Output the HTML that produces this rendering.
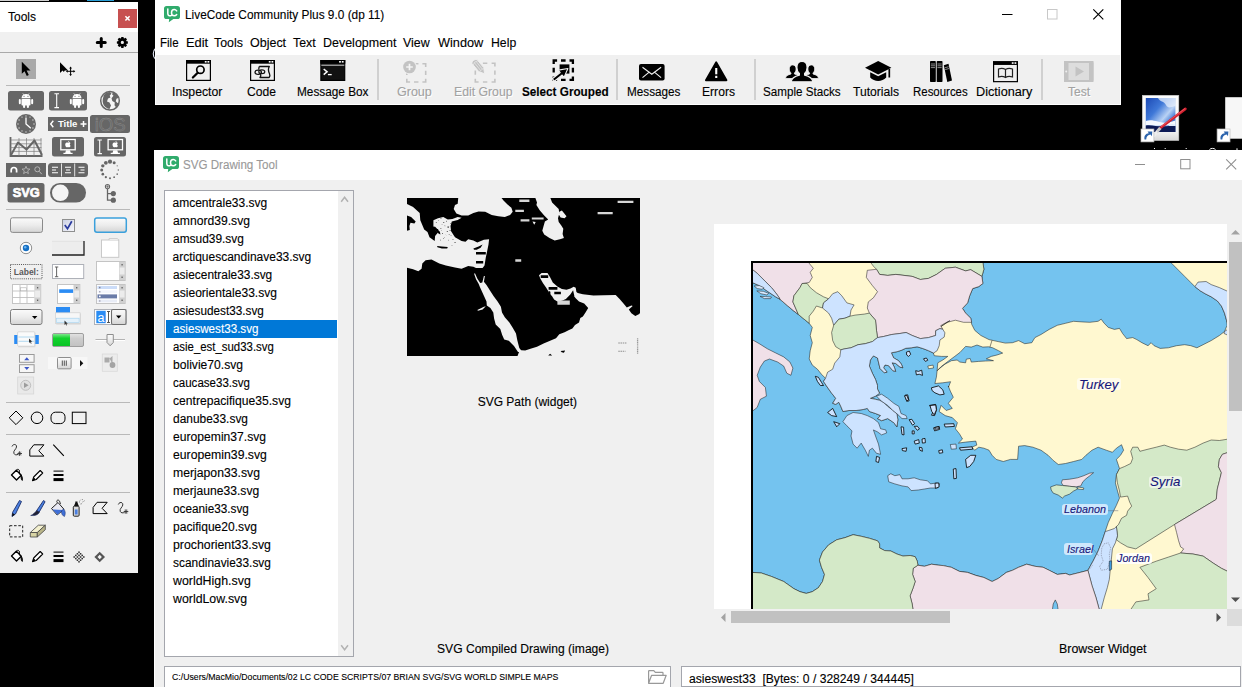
<!DOCTYPE html>
<html lang="en"><head><meta charset="utf-8"><title>LiveCode - SVG Drawing Tool</title>
<style>
html,body{margin:0;padding:0}
body{width:1242px;height:687px;background:#000;overflow:hidden;position:relative;font-family:"Liberation Sans",sans-serif;font-size:12px;color:#000}
.a{position:absolute}
.t{position:absolute;white-space:pre;line-height:1;transform-origin:0 50%;-webkit-text-stroke:.12px currentColor}
svg{position:absolute;overflow:visible}
.win{position:absolute;background:#f0f0f0}
.sep{position:absolute;left:6px;width:124px;height:1px;background:#b9b9b9}
.vsep{position:absolute;top:59px;width:2px;height:41px;background:#d0d0d0}
.li{position:absolute;left:1px;width:171px;height:18px}
.sel{background:#0078d7}
.field{position:absolute;background:#fff;border:1px solid #7a7a7a;box-sizing:border-box}
</style>
</head>
<body>
<div class="a" id="desktop" style="left:0;top:0;width:1242px;height:687px">
<div class="a" style="left:0;top:0;width:49px;height:1px;background:#cfcfcf"></div>
<div class="a" style="left:87px;top:0;width:27px;height:1px;background:#2a9fd6"></div>
<svg style="left:150px;top:48px" width="6" height="12" viewBox="0 0 6 12"><path d="M5.500 .5C2.500 3 2.500 8.500 5.500 11" fill="none" stroke="#e8eefc" stroke-width="1.100"/></svg>
<svg style="left:1140px;top:94px" width="50" height="56" viewBox="1140 94 50 56"><defs><linearGradient id="fr" x1="0" y1="0" x2="0" y2="1"><stop offset="0" stop-color="#fdfdfd"/><stop offset=".8" stop-color="#f2f2f2"/><stop offset="1" stop-color="#d8d8d8"/></linearGradient><linearGradient id="sky" x1="0" y1="0" x2="1" y2="1"><stop offset="0" stop-color="#1c49b4"/><stop offset=".35" stop-color="#3f78d8"/><stop offset=".6" stop-color="#b9d2f4"/><stop offset=".75" stop-color="#4a80d8"/><stop offset="1" stop-color="#2a58b8"/></linearGradient></defs><rect x="1142.300" y="95.300" width="36.500" height="45.200" fill="url(#fr)" stroke="#c9c9c9" stroke-width=".6"/><rect x="1145.800" y="98" width="29.600" height="34" fill="url(#sky)"/><path d="M1158 98c2 4 6 3 8 7s5 2 9.400 1V98z" fill="#e8f0fc" opacity=".75"/><path d="M1145.800 121c4-1.500 8-.5 12 .5s8 2.500 17.600-1v5h-29.600z" fill="#f4f8ff"/><path d="M1145.800 125.500c6-1 12 1.500 18 1s8-1 11.600-.5V132h-29.600z" fill="#0d1a55"/><path d="M1169 124.500c2-.8 4-.6 6.400 0v1.500h-6.400z" fill="#dfe9fb"/><path d="M1185.400 108.900L1160.300 128" stroke="#d3202f" stroke-width="2.600" stroke-linecap="round"/><path d="M1185 108.500L1161 126.800" stroke="#f06a70" stroke-width=".7"/><path d="M1160.300 128l-3.800 4.200" stroke="#c8c8c8" stroke-width="3.200"/><path d="M1156.500 132l-2.300 3.800" stroke="#efefef" stroke-width="2.400" stroke-linecap="round"/><rect x="1141" y="129" width="12.900" height="12.900" fill="#fff" stroke="#bdbdbd" stroke-width=".7"/><path d="M1144.500 139.500c-.6-3.600 1-6 4.300-6.300l-1.200-1.700 4.700.1-.4 4.600-1.300-1.600c-2.700.2-4.300 2.200-4.400 4.900z" fill="#2b63ad"/></svg>
<svg style="left:1216px;top:96px" width="26" height="54" viewBox="1216 96 26 54"><rect x="1225.200" y="97.200" width="20" height="41.500" fill="#f7f7f7"/><rect x="1217.100" y="129" width="12.900" height="12.900" fill="#fff" stroke="#bdbdbd" stroke-width=".7"/><path d="M1220.600 139.500c-.6-3.600 1-6 4.300-6.300l-1.200-1.700 4.700.1-.4 4.600-1.300-1.600c-2.700.2-4.300 2.200-4.400 4.900z" fill="#2b63ad"/></svg>
<svg style="left:1150px;top:147px" width="92" height="3" viewBox="1150 147 92 3"><path d="M1154 148.500h1M1164.700 148.500h1M1185.700 148.500h1M1209.500 149.500c1.500-1.500 4.500-1.500 6 0M1237 148.300v1.700" stroke="#fff" stroke-width="1" fill="none"/></svg>
</div>
<div class="win" id="tools-palette" style="left:0;top:2px;width:138px;height:571px;background:#f0f0f0">
<div class="a" id="tools-title" style="left:0;top:0;width:138px;height:30px;background:#fff">
<span class="t" style="left:8.10px;top:7.85px;font-size:13.5px;transform:scaleX(0.8884);">Tools</span>
<div class="a" style="left:118px;top:7px;width:19px;height:19px;background:#c75050"><svg style="left:0;top:0" width="19" height="19" viewBox="0 0 19 19"><path d="M7.400 7.300l4.200 4.300M11.600 7.300l-4.200 4.300" stroke="#fff" stroke-width="1.500"/></svg></div>
</div>
<div class="a" style="left:0;top:50px;width:138px;height:1px;background:#a9a9a9"></div>
<div class="sep" style="top:83px"></div>
<div class="sep" style="top:206.7px"></div>
<div class="sep" style="top:400.1px"></div>
<div class="sep" style="top:431.9px"></div>
<div class="sep" style="top:490.1px"></div>
<svg id="tools-icons" style="left:0;top:0" width="138" height="571" viewBox="0 2 138 571">
<path d="M101.250 38.400v8M97.250 42.400h8" stroke="#000" stroke-width="3" stroke-linecap="round"/>
<g transform="translate(122.350 42.400)"><circle r="2.950" fill="none" stroke="#000" stroke-width="2.700"/><rect x="-1.250" y="-5.500" width="2.500" height="2.400" rx=".5" fill="#000" transform="rotate(0)"/><rect x="-1.250" y="-5.500" width="2.500" height="2.400" rx=".5" fill="#000" transform="rotate(45)"/><rect x="-1.250" y="-5.500" width="2.500" height="2.400" rx=".5" fill="#000" transform="rotate(90)"/><rect x="-1.250" y="-5.500" width="2.500" height="2.400" rx=".5" fill="#000" transform="rotate(135)"/><rect x="-1.250" y="-5.500" width="2.500" height="2.400" rx=".5" fill="#000" transform="rotate(180)"/><rect x="-1.250" y="-5.500" width="2.500" height="2.400" rx=".5" fill="#000" transform="rotate(225)"/><rect x="-1.250" y="-5.500" width="2.500" height="2.400" rx=".5" fill="#000" transform="rotate(270)"/><rect x="-1.250" y="-5.500" width="2.500" height="2.400" rx=".5" fill="#000" transform="rotate(315)"/></g>
<rect x="16" y="59" width="20" height="20" fill="#a9a9a9"/>
<path d="M21.800 61.800v12l2.800-2.600 2.200 4.800 2-.9-2.200-4.700h3.900z" fill="#000"/>
<path d="M60 62.200v10.800l2.600-2.400 1.200 1.300 1-1.500h3.300z" fill="#000"/>
<path d="M70.600 67.800v7M67.100 71.300h7" stroke="#000" stroke-width="1"/><path d="M70.600 66.600l1.400 1.800h-2.800zM70.600 76l1.400-1.800h-2.800zM65.900 71.300l1.800-1.400v2.800zM75.300 71.300l-1.800-1.400v2.800z" fill="#000"/>
<rect x="8" y="91" width="36" height="19.600" rx="2.500" fill="#666666"/>
<g transform="translate(26 93.2) scale(0.98)" fill="#fff"><path d="M-4.600 5.200A4.600 4.400 0 0 1 4.600 5.200z"/><path d="M-3.200 .2l1 1.600M3.200 .2l-1 1.600" stroke="#fff" stroke-width=".7" fill="none"/><rect x="-4.600" y="5.900" width="9.200" height="6.600" rx=".9"/><rect x="-7.300" y="5.900" width="2" height="5.400" rx="1"/><rect x="5.300" y="5.900" width="2" height="5.400" rx="1"/><rect x="-3" y="11.500" width="2.100" height="3.700" rx="1"/><rect x=".9" y="11.500" width="2.100" height="3.700" rx="1"/><circle cx="-2" cy="3.200" r=".55" fill="#666"/><circle cx="2" cy="3.200" r=".55" fill="#666"/></g>
<rect x="49" y="91" width="38" height="19.600" rx="2.500" fill="#666666"/>
<path d="M54.4 93.8h4.6M54.4 107.6h4.6M56.7 93.8V107.6" stroke="#fff" stroke-width="1.1" fill="none"/>
<g transform="translate(77 93.2) scale(0.98)" fill="#fff"><path d="M-4.600 5.200A4.600 4.400 0 0 1 4.600 5.200z"/><path d="M-3.200 .2l1 1.600M3.200 .2l-1 1.600" stroke="#fff" stroke-width=".7" fill="none"/><rect x="-4.600" y="5.900" width="9.200" height="6.600" rx=".9"/><rect x="-7.300" y="5.900" width="2" height="5.400" rx="1"/><rect x="5.300" y="5.900" width="2" height="5.400" rx="1"/><rect x="-3" y="11.500" width="2.100" height="3.700" rx="1"/><rect x=".9" y="11.500" width="2.100" height="3.700" rx="1"/><circle cx="-2" cy="3.200" r=".55" fill="#666"/><circle cx="2" cy="3.200" r=".55" fill="#666"/></g>
<circle cx="110" cy="100.800" r="9.300" fill="#f6f6f6" stroke="#666666" stroke-width="1.500"/>
<path d="M103.500 95.500c2-2.500 4.500-3.300 6.500-3.400l1.500 1.500-1.800 2.200.8 1.800-2.500 1-1 2.800 2.500 1.200 1.500 3-1.500 3.500c-2.500-.5-4.500-2-5.800-4-1.200-2.200-1.500-5-.2-8.600zM113 92.300c3 .8 5 3 5.800 5.500l-2.300 1-.8 2.500 1.800 1.700 1.200-.3c-.3 2-1.200 3.600-2.500 4.800l-1.700-2.200.3-2.800-2.500-1.500-.8-2.700 2-2.500-1.500-1.500z" fill="#666666"/>
<circle cx="26" cy="124" r="10" fill="#666666"/>
<circle cx="26.00" cy="116.00" r=".65" fill="#ddd"/><circle cx="30.00" cy="117.07" r=".65" fill="#ddd"/><circle cx="32.93" cy="120.00" r=".65" fill="#ddd"/><circle cx="34.00" cy="124.00" r=".65" fill="#ddd"/><circle cx="32.93" cy="128.00" r=".65" fill="#ddd"/><circle cx="30.00" cy="130.93" r=".65" fill="#ddd"/><circle cx="26.00" cy="132.00" r=".65" fill="#ddd"/><circle cx="22.00" cy="130.93" r=".65" fill="#ddd"/><circle cx="19.07" cy="128.00" r=".65" fill="#ddd"/><circle cx="18.00" cy="124.00" r=".65" fill="#ddd"/><circle cx="19.07" cy="120.00" r=".65" fill="#ddd"/><circle cx="22.00" cy="117.07" r=".65" fill="#ddd"/>
<path d="M26 117.500V124l4.800 4.300" fill="none" stroke="#fff" stroke-width="1.300"/>
<rect x="48" y="117" width="40" height="14" fill="#666666"/>
<path d="M53.300 120.800l-2.600 3.200 2.600 3.200" fill="none" stroke="#fff" stroke-width="1.400"/><path d="M83.500 121v6M80.500 124h6" stroke="#fff" stroke-width="1.500"/>
<text x="67.700" y="127.300" text-anchor="middle" font-family="Liberation Sans,sans-serif" font-weight="bold" font-size="9" fill="#fff" textLength="19.500" lengthAdjust="spacingAndGlyphs">Title</text>
<rect x="90" y="115" width="40" height="18" rx="2.500" fill="#666666"/>
<text x="110.200" y="131.300" text-anchor="middle" font-family="Liberation Sans,sans-serif" font-size="19" fill="#6a6a6a" stroke="#929292" stroke-width=".4" textLength="31" lengthAdjust="spacingAndGlyphs">iOS</text>
<path d="M10.500 137v19h32" fill="none" stroke="#666666" stroke-width="1.800"/>
<path d="M10.500 140h31M10.500 143.800h31M10.500 147.600h31M10.500 151.400h31M19 138v18M26.500 138v18M34 138v18M41 138v18" stroke="#7c7c7c" stroke-width=".7"/>
<path d="M11 155l7-12.500 8.500 7 8-9 7.500 14.500" fill="none" stroke="#666666" stroke-width="2" stroke-linejoin="round"/>
<rect x="52" y="137" width="32" height="19.600" rx="2.500" fill="#666666"/>
<g transform="translate(68 139.5)"><rect x="-7.200" y="0" width="14.400" height="10.300" fill="none" stroke="#fff" stroke-width="1.300"/><path d="M-2 10.800h4l.8 2.600h-5.600z" fill="#fff"/><rect x="-4.600" y="13.300" width="9.200" height="1.200" fill="#fff"/><path d="M0 3.200c.9-1 2.300-.6 2.500.6-.9.500-.9 1.900.1 2.400-.5 1.500-1.500 2-2.600 1.400-1.100.6-2.100.1-2.600-1.400-.5-1.400 0-3 1.200-3.200.5-.1 1 0 1.400.2z" fill="#fff"/><path d="M.1 2.700c0-.8.500-1.400 1.200-1.500 0 .8-.5 1.400-1.200 1.500z" fill="#fff"/></g>
<rect x="94" y="137" width="32" height="19.600" rx="2.500" fill="#666666"/>
<path d="M97.5 140h4.4M97.5 153.6h4.4M99.7 140V153.6" stroke="#fff" stroke-width="1.1" fill="none"/>
<g transform="translate(115.3 139.5)"><rect x="-7.200" y="0" width="14.400" height="10.300" fill="none" stroke="#fff" stroke-width="1.300"/><path d="M-2 10.800h4l.8 2.600h-5.600z" fill="#fff"/><rect x="-4.600" y="13.300" width="9.200" height="1.200" fill="#fff"/><path d="M0 3.200c.9-1 2.300-.6 2.500.6-.9.500-.9 1.900.1 2.400-.5 1.500-1.500 2-2.600 1.400-1.100.6-2.100.1-2.600-1.400-.5-1.400 0-3 1.200-3.200.5-.1 1 0 1.400.2z" fill="#fff"/><path d="M.1 2.700c0-.8.500-1.400 1.200-1.500 0 .8-.5 1.400-1.200 1.500z" fill="#fff"/></g>
<rect x="6" y="163" width="40" height="14" fill="#666666"/>
<path d="M11.200 172.500v-2.300a2.700 2.700 0 0 1 5.400 0v2.300" fill="none" stroke="#fff" stroke-width="1.700"/>
<path d="M26 166.300l1.100 2.600 2.800.2-2.200 1.800.7 2.700-2.400-1.500-2.400 1.500.7-2.700-2.200-1.800 2.800-.2z" fill="none" stroke="#bbb" stroke-width=".8"/>
<circle cx="37.300" cy="169.300" r="2.500" fill="none" stroke="#bbb" stroke-width=".9"/><path d="M39.200 171.300l2.600 2.900" stroke="#bbb" stroke-width="1"/>
<rect x="48" y="163" width="40" height="14" rx="3.500" fill="#666666"/>
<path d="M61.500 163.500v13M74.700 163.500v13" stroke="#f0f0f0" stroke-width=".9"/>
<path d="M52 167.300h6M52 170h4M52 172.700h6M65 167.300h6M66 170h4M65 172.700h6M78.500 167.300h6M80.500 170h4M78.500 172.700h6" stroke="#fff" stroke-width="1.100"/>
<circle cx="110.00" cy="161.70" r="2.1" fill="#666666"/><circle cx="105.85" cy="162.81" r="1.9" fill="#666666"/><circle cx="102.81" cy="165.85" r="1.7" fill="#666666"/><circle cx="101.70" cy="170.00" r="1.5" fill="#666666"/><circle cx="102.81" cy="174.15" r="1.3" fill="#666666"/><circle cx="105.85" cy="177.19" r="1.1" fill="#666666"/><circle cx="110.00" cy="178.30" r="1" fill="#666666"/><circle cx="114.15" cy="177.19" r="0.9" fill="#666666"/><circle cx="117.19" cy="174.15" r="0.8" fill="#666666"/><circle cx="118.30" cy="170.00" r="0.7" fill="#666666"/><circle cx="117.19" cy="165.85" r="0.6" fill="#666666"/><circle cx="114.15" cy="162.81" r="1.5" fill="#666666"/>
<rect x="7.500" y="183" width="37" height="19.600" rx="2.500" fill="#666666"/>
<text x="26.200" y="197.400" text-anchor="middle" font-family="Liberation Sans,sans-serif" font-weight="bold" font-size="12" fill="#fff" stroke="#fff" stroke-width=".7" textLength="27" lengthAdjust="spacingAndGlyphs">SVG</text>
<rect x="50" y="183" width="36" height="19.600" rx="9.800" fill="#666666"/><circle cx="60.300" cy="192.800" r="8.300" fill="#f4f4f4"/>
<path d="M107.500 189v11.200h5.500M107.500 193.600h5.500" fill="none" stroke="#666666" stroke-width="1.300"/><circle cx="107.500" cy="186.600" r="2.100" fill="#f0f0f0" stroke="#666666" stroke-width="1.100"/><path d="M107.500 185.300v2.600M106.200 186.600h2.600" stroke="#666666" stroke-width=".7"/><circle cx="113.300" cy="193.600" r="2.600" fill="#666666"/><circle cx="113.300" cy="200.200" r="2.600" fill="#666666"/>
<defs><linearGradient id="bg1" x1="0" y1="0" x2="0" y2="1"><stop offset="0" stop-color="#fbfbfb"/><stop offset=".5" stop-color="#ececec"/><stop offset="1" stop-color="#d4d4d4"/></linearGradient><linearGradient id="bg2" x1="0" y1="0" x2="1" y2="1"><stop offset="0" stop-color="#c9cfe4"/><stop offset="1" stop-color="#f8f8fb"/></linearGradient></defs>
<rect x="10.500" y="217.800" width="32" height="14.600" rx="2" fill="url(#bg1)" stroke="#8a8a8a" stroke-width="1"/>
<rect x="62.500" y="219.500" width="12" height="12" fill="url(#bg2)" stroke="#8e8f8f" stroke-width="1"/><path d="M64.800 225l2.700 3.700 4.300-7.400" fill="none" stroke="#2a3b9e" stroke-width="1.700"/>
<rect x="94.700" y="218" width="31.600" height="14.300" rx="2.200" fill="url(#bg1)" stroke="#3aa0dc" stroke-width="1.500"/>
<circle cx="26" cy="248" r="5.700" fill="#fff" stroke="#8e8f8f" stroke-width="1"/><circle cx="26" cy="248" r="3.200" fill="#1670c4"/><circle cx="25.200" cy="247.200" r="1.200" fill="#6cb3ee"/>
<rect x="52" y="241" width="32" height="14.600" fill="#ededed"/><path d="M52 241.300h32" stroke="#dcdcdc" stroke-width=".6"/><path d="M52 255h32V241" fill="none" stroke="#222" stroke-width="1.300"/>
<rect x="101.500" y="240" width="17.300" height="17.300" fill="#fff" stroke="#c4c4c4" stroke-width=".9"/><path d="M109 240v-1.300h8.300l1.500 1.300" fill="#f4f4f4" stroke="#c4c4c4" stroke-width=".9"/>
<rect x="10.500" y="264.500" width="31.500" height="14.300" fill="none" stroke="#555" stroke-width="1" stroke-dasharray="1 1.100"/>
<text x="13.800" y="274.800" font-family="Liberation Sans,sans-serif" font-weight="bold" font-size="8.800" fill="#5a5a5a" textLength="25" lengthAdjust="spacingAndGlyphs">Label:</text>
<rect x="52.500" y="264.500" width="31.200" height="14" fill="#fff" stroke="#aeb1b8" stroke-width="1"/>
<path d="M54.95 267h3.3M54.95 276.7h3.3M56.6 267V276.7" stroke="#555" stroke-width="0.9" fill="none"/>
<rect x="96.500" y="261.500" width="28.600" height="19" fill="#fff" stroke="#c4c4c4" stroke-width="1"/>
<rect x="119.3" y="262" width="5.6" height="18" fill="#ececec" stroke="#c8c8c8" stroke-width=".5"/><rect x="119.3" y="262" width="5.6" height="5.5" fill="#d0d0d0"/><rect x="119.3" y="274.5" width="5.6" height="5.5" fill="#d0d0d0"/><rect x="121.45" y="264.1" width="1.300" height="1.300" fill="#555"/><rect x="121.45" y="276.6" width="1.300" height="1.300" fill="#555"/>
<rect x="12.500" y="284.500" width="28.200" height="19" fill="#fff" stroke="#c4c4c4" stroke-width="1"/><path d="M13 291h21.500M13 297.500h21.500M20 285v18M27 285v18" stroke="#b9b9b9" stroke-width=".8"/><rect x="20.500" y="287.800" width="6" height="3" fill="#fff" stroke="#aaa" stroke-width=".6"/>
<rect x="34.8" y="285" width="5.6" height="18" fill="#ececec" stroke="#c8c8c8" stroke-width=".5"/><rect x="34.8" y="285" width="5.6" height="5.5" fill="#d0d0d0"/><rect x="34.8" y="297.5" width="5.6" height="5.5" fill="#d0d0d0"/><rect x="36.95" y="287.1" width="1.300" height="1.300" fill="#555"/><rect x="36.95" y="299.6" width="1.300" height="1.300" fill="#555"/>
<rect x="57.500" y="284.500" width="22.300" height="19" fill="#fff" stroke="#c4c4c4" stroke-width="1"/><rect x="59.200" y="289.300" width="14" height="3.600" fill="#2b8cf4"/>
<rect x="73.9" y="285" width="5.6" height="18" fill="#ececec" stroke="#c8c8c8" stroke-width=".5"/><rect x="73.9" y="285" width="5.6" height="5.5" fill="#d0d0d0"/><rect x="73.9" y="297.5" width="5.6" height="5.5" fill="#d0d0d0"/><rect x="76.05" y="287.1" width="1.300" height="1.300" fill="#555"/><rect x="76.05" y="299.6" width="1.300" height="1.300" fill="#555"/>
<rect x="96.500" y="284.500" width="28.600" height="19" fill="#fff" stroke="#c4c4c4" stroke-width="1"/><rect x="97.500" y="286" width="19.500" height="3" fill="#cbdcf8"/><rect x="97.500" y="294.400" width="19.500" height="4" fill="#6a7ba8"/><rect x="97.500" y="290.300" width="19.500" height="2.800" fill="#f4f6fc"/><rect x="97.500" y="299.600" width="19.500" height="2.800" fill="#e8ecf6"/><rect x="99" y="286.800" width="1.500" height="1.500" fill="#889"/><rect x="99" y="291" width="1.500" height="1.500" fill="#aab"/><rect x="99" y="295.600" width="1.600" height="1.600" fill="#fff"/><rect x="99" y="300.200" width="1.500" height="1.500" fill="#aab"/>
<rect x="119.3" y="285" width="5.6" height="18" fill="#ececec" stroke="#c8c8c8" stroke-width=".5"/><rect x="119.3" y="285" width="5.6" height="5.5" fill="#d0d0d0"/><rect x="119.3" y="297.5" width="5.6" height="5.5" fill="#d0d0d0"/><rect x="121.45" y="287.1" width="1.300" height="1.300" fill="#555"/><rect x="121.45" y="299.6" width="1.300" height="1.300" fill="#555"/>
<rect x="10.500" y="309.500" width="31.500" height="15" rx="2" fill="url(#bg1)" stroke="#7d7d7d" stroke-width="1"/><path d="M32 316l2.700 3 2.700-3z" fill="#000"/>
<rect x="56" y="307" width="14" height="5.800" fill="#2b8cf4"/><rect x="56.200" y="313.600" width="24.600" height="11" fill="#d0d0d0" opacity=".7"/><rect x="55.500" y="312.800" width="24.600" height="10.800" fill="#f7f7f7" stroke="#c9c9c9" stroke-width=".6"/><rect x="56.500" y="318.200" width="22.600" height="4.200" fill="#e3f1fb" stroke="#9fd0ee" stroke-width=".6"/><path d="M64.500 320.500v4.500l1.100-1 .8 1.600.7-.3-.8-1.600h1.500z" fill="#333"/>
<rect x="94.500" y="309.500" width="31.500" height="15" fill="#fff" stroke="#aeb1b8" stroke-width="1"/><rect x="96.300" y="310.800" width="9.400" height="12.400" fill="#2b8cf4"/><text x="97.500" y="321.500" font-family="Liberation Sans,sans-serif" font-size="12.500" fill="#fff">a</text>
<path d="M107 311.5h3M107 322.5h3M108.5 311.5V322.5" stroke="#444" stroke-width="0.9" fill="none"/>
<rect x="111.500" y="309.500" width="14.500" height="15" rx="1.500" fill="url(#bg1)" stroke="#6f6f6f" stroke-width="1.100"/><path d="M116 315.500l2.700 3 2.700-3z" fill="#000"/>
<rect x="14.200" y="335" width="24.600" height="9" fill="#2b8cf4"/><rect x="18.200" y="333" width="17.200" height="14.300" fill="#cfcfcf" opacity=".6"/><rect x="17.600" y="331.800" width="17.200" height="14.400" rx="1" fill="#fafafa" stroke="#c6c6c6" stroke-width=".6"/><path d="M18.500 337h15.500M18.500 341.300h15.500" stroke="#9fd0ee" stroke-width=".8"/><path d="M29 338.500v4.600l1.100-1 .8 1.600.7-.3-.8-1.600h1.500z" fill="#333"/>
<defs><linearGradient id="gg" x1="0" y1="0" x2="0" y2="1"><stop offset="0" stop-color="#7be88a"/><stop offset=".35" stop-color="#13d22e"/><stop offset="1" stop-color="#0ac426"/></linearGradient><linearGradient id="gr" x1="0" y1="0" x2="0" y2="1"><stop offset="0" stop-color="#e4e4e4"/><stop offset=".4" stop-color="#cdcdcd"/><stop offset="1" stop-color="#c2c2c2"/></linearGradient></defs>
<rect x="52.500" y="333.500" width="31" height="13" rx="1.500" fill="url(#gr)" stroke="#9e9e9e" stroke-width="1"/><rect x="53" y="334" width="17" height="12" fill="url(#gg)"/>
<path d="M95.500 339.500h29.500" stroke="#b3b3b3" stroke-width="1"/><path d="M95.500 340.500h29.500" stroke="#fff" stroke-width="1"/><path d="M107 334.500h6.300v8l-3.150 3.300-3.150-3.300z" fill="url(#bg1)" stroke="#8e8e8e" stroke-width="1"/>
<rect x="19.500" y="354.500" width="14.600" height="7.800" fill="#f6f6f6" stroke="#9a9a9a" stroke-width="1"/><rect x="19.500" y="364.700" width="14.600" height="7.800" fill="#f6f6f6" stroke="#9a9a9a" stroke-width="1"/><path d="M24.200 360.200l2.600-3 2.600 3zM24.200 367l2.600 3 2.600-3z" fill="#3b55c6"/>
<rect x="48" y="357" width="39.400" height="12" fill="#f7f7f7"/><rect x="57.500" y="357.500" width="13.600" height="11.300" rx="1" fill="url(#bg1)" stroke="#8e8e8e" stroke-width="1"/><path d="M62.300 360.500v5.300M64.300 360.500v5.300M66.300 360.500v5.300" stroke="#555" stroke-width="1"/><path d="M80 360l3.300 3.200-3.300 3.200z" fill="#111"/>
<rect x="102.300" y="354" width="15" height="17.300" fill="#ececec" stroke="#dadada" stroke-width=".8"/><path d="M104.500 357.500h5v5h-5zM109.500 358.500l3-2.500v8z" fill="#ababab"/><circle cx="112.500" cy="365" r="2.900" fill="#a4a4a4"/>
<rect x="17.700" y="377" width="16" height="17" fill="#e9e9e9" stroke="#d6d6d6" stroke-width=".8"/><circle cx="25.700" cy="385.300" r="5" fill="#e0e0e0" stroke="#c0c0c0" stroke-width="1"/><path d="M24 382.500l4.600 2.800-4.600 2.800z" fill="#9c9c9c"/>
<path d="M9.200 417.800L16 411l6.800 6.800L16 424.600z" fill="none" stroke="#000" stroke-width="1"/><circle cx="37" cy="417.800" r="5.800" fill="none" stroke="#000" stroke-width="1"/><rect x="51" y="412.200" width="14" height="11.400" rx="4.500" fill="none" stroke="#000" stroke-width="1"/><rect x="72.300" y="412.200" width="13.700" height="11.400" fill="none" stroke="#000" stroke-width="1"/>
<g transform="translate(11.5 444)"><path d="M.5 2.500c1-3 5-2.500 4.500.5-.4 2.300-3.500 3.800-2.600 6.300.6 1.700 2.800 2 4.300 1" fill="none" stroke="#333" stroke-width="1"/><path d="M8.200 7.300v4.600M5.900 9.600h4.600" stroke="#333" stroke-width="1"/><path d="M6.600 8l3.200 3.200M9.800 8l-3.200 3.200" stroke="#333" stroke-width=".5"/></g>
<path d="M29.8 456.1v-6.200l4-5.100h10.100l-5.100 6 5.100 5.300z" fill="none" stroke="#000" stroke-width="1" stroke-linejoin="round"/>
<path d="M53.300 444.600l10.500 11.300" stroke="#000" stroke-width="1.100"/>
<g transform="translate(10.5 469.5)"><path d="M1 5.500L5.800 .8l5 5-4.800 4.700z" fill="#fff" stroke="#000" stroke-width="1.400" stroke-linejoin="round"/><path d="M6 .3c1.500-1 3-.3 3 1.500v3" fill="none" stroke="#000" stroke-width="1"/><path d="M10.800 5.800c1 1.500 1.500 3 1 5.200-1-.5-1.500-2.500-1-5.200z" fill="#000" stroke="#000" stroke-width=".8"/></g>
<g transform="translate(32.2 470)"><path d="M.3 10.700l1.200-3.700L8 .5l2.500 2.500L4 9.500z" fill="#fff" stroke="#000" stroke-width="1.100" stroke-linejoin="round"/><path d="M.3 10.700l1.100-3.400 2.300 2.300z" fill="#000"/></g>
<path d="M53.5 471.1h10" stroke="#000" stroke-width="1"/><path d="M53.5 475h10" stroke="#000" stroke-width="2"/><path d="M53.5 479.6h10" stroke="#000" stroke-width="3"/>
<path d="M19.500 500.500l2 1-6 12.500-3.500 2.500.6-4.200z" fill="#4a7fe0" stroke="#1c2f6a" stroke-width=".9" stroke-linejoin="round"/><path d="M12 516.500l.5-3.400 2.500 1.300z" fill="#111"/>
<path d="M43.500 500.500l1.600 1.200-6 10.500-2.500-1.500z" fill="#4a7fe0" stroke="#1c2f6a" stroke-width=".9"/><path d="M36.800 510.500l2.600 1.700c-1 2.500-4.500 3.800-8.700 3.300 2.500-.8 3.600-2.600 6.100-5z" fill="#223" stroke="#1c2f6a" stroke-width=".6"/>
<path d="M51.500 508.500l6.500-6 6 6.800-6.800 5.700z" fill="#e9e9f2" stroke="#222" stroke-width="1" stroke-linejoin="round"/><path d="M52.500 509.500l10.500.5-5.500 4.700z" fill="#3f6fd6"/><path d="M57 502.500c-1-2.500 1.500-3.200 2.500-1.500l1 3" fill="none" stroke="#222" stroke-width=".9"/><path d="M63.500 509c2 1.800 2.300 4.300 1 7.500-1.800-.5-3.200-2.500-3.200-5.500z" fill="#3f6fd6" stroke="#1c2f6a" stroke-width=".5"/>
<rect x="73.300" y="506.200" width="5.800" height="10" rx="1" fill="#d9d9d9" stroke="#222" stroke-width="1"/><rect x="74.800" y="509.500" width="2.800" height="5" fill="#4a7fe0"/><path d="M74 506l1.200-3h2.400l1.200 3z" fill="#111"/><rect x="75.300" y="501.500" width="2.200" height="1.800" fill="#111"/><path d="M79 502.200l1-.5M80.500 504l1.300-.3M80 500.500l.8-.8M82.500 502l1-.5M82.200 499.800l.8-.6M84 501l.6-.3" stroke="#555" stroke-width=".7"/>
<path d="M93.1 513.6v-6.200l4-5.100h10.100l-5.100 6 5.100 5.300z" fill="none" stroke="#000" stroke-width="1" stroke-linejoin="round"/>
<g transform="translate(117.8 502)"><path d="M.5 2.500c1-3 5-2.500 4.500.5-.4 2.300-3.500 3.800-2.600 6.300.6 1.700 2.800 2 4.300 1" fill="none" stroke="#333" stroke-width="1"/><path d="M8.200 7.300v4.600M5.900 9.600h4.600" stroke="#333" stroke-width="1"/><path d="M6.600 8l3.200 3.200M9.800 8l-3.200 3.200" stroke="#333" stroke-width=".5"/></g>
<rect x="9.700" y="525.700" width="13" height="11.200" fill="none" stroke="#222" stroke-width="1" stroke-dasharray="2.600 1.700"/>
<path d="M30.300 532.500l8-7.300h7l-8 7.300z" fill="#f3f0cf" stroke="#444" stroke-width=".8" stroke-linejoin="round"/><path d="M30.300 532.500h7v4.500h-7z" fill="#d8d4a4" stroke="#444" stroke-width=".8" stroke-linejoin="round"/><path d="M37.300 532.500l8-7.300v4.500l-8 7.300z" fill="#b9b58a" stroke="#444" stroke-width=".8" stroke-linejoin="round"/>
<g transform="translate(10.5 550.5)"><path d="M1 5.500L5.800 .8l5 5-4.800 4.700z" fill="#fff" stroke="#000" stroke-width="1.400" stroke-linejoin="round"/><path d="M6 .3c1.500-1 3-.3 3 1.500v3" fill="none" stroke="#000" stroke-width="1"/><path d="M10.800 5.800c1 1.500 1.500 3 1 5.200-1-.5-1.500-2.500-1-5.200z" fill="#000" stroke="#000" stroke-width=".8"/></g>
<g transform="translate(32.2 551)"><path d="M.3 10.700l1.200-3.700L8 .5l2.500 2.500L4 9.500z" fill="#fff" stroke="#000" stroke-width="1.100" stroke-linejoin="round"/><path d="M.3 10.700l1.100-3.400 2.300 2.300z" fill="#000"/></g>
<path d="M53.5 552.1h10" stroke="#000" stroke-width="1"/><path d="M53.5 556h10" stroke="#000" stroke-width="2"/><path d="M53.5 560.6h10" stroke="#000" stroke-width="3"/>
<g fill="#2a2a2a"><rect x="73.45" y="556.25" width="1.500" height="1.500"/><rect x="75.05" y="554.65" width="1.500" height="1.500"/><rect x="75.05" y="557.85" width="1.500" height="1.500"/><rect x="76.65" y="553.05" width="1.500" height="1.500"/><rect x="76.65" y="556.25" width="1.500" height="1.500"/><rect x="76.65" y="559.45" width="1.500" height="1.500"/><rect x="78.25" y="551.45" width="1.500" height="1.500"/><rect x="78.25" y="554.65" width="1.500" height="1.500"/><rect x="78.25" y="557.85" width="1.500" height="1.500"/><rect x="78.25" y="561.05" width="1.500" height="1.500"/><rect x="79.85" y="553.05" width="1.500" height="1.500"/><rect x="79.85" y="556.25" width="1.500" height="1.500"/><rect x="79.85" y="559.45" width="1.500" height="1.500"/><rect x="81.45" y="554.65" width="1.500" height="1.500"/><rect x="81.45" y="557.85" width="1.500" height="1.500"/><rect x="83.05" y="556.25" width="1.500" height="1.500"/></g>
<path d="M99.700 551.700l5.300 5.300-5.300 5.300-5.300-5.300z" fill="#555"/><path d="M99.700 554.800l2.200 2.200-2.200 2.200-2.200-2.200z" fill="#f4f4f4"/>
</svg>
</div>
<div class="win" id="ide-main" style="left:155px;top:0;width:966px;height:105px;background:#fff">

<div class="a" id="main-inner" style="left:1px;top:0;width:965px;height:104px">
<div class="a" id="titlebar" style="left:0;top:0;width:965px;height:30px;background:#fff">
<svg style="left:8px;top:6px" width="16" height="17" viewBox="0 0 16 17"><path d="M2.600 0h10.800a2.600 2.600 0 0 1 2.600 2.600v7.800a2.600 2.600 0 0 1-2.600 2.600H9.400L4.800 16.300l.4-3.300H2.600A2.600 2.600 0 0 1 0 10.400V2.600A2.600 2.600 0 0 1 2.600 0z" fill="#30ab6c"/><path d="M3.800 3v4.500c0 2 1.600 2.800 3.400 2.100M12.700 4.900c-.6-.8-1.400-1.300-2.400-1.300-1.700 0-2.800 1.300-2.800 3.100s1.100 3.100 2.800 3.100c1 0 1.800-.5 2.400-1.300" fill="none" stroke="#fff" stroke-width="1.500" stroke-linecap="round" stroke-linejoin="round"/></svg>
<span class="t" style="left:28.60px;top:9.20px;font-size:12px;transform:scaleX(0.9872);">LiveCode Community Plus 9.0 (dp 11)</span>
<svg style="left:845.5px;top:9px" width="110" height="12" viewBox="0 0 110 12"><path d="M0 5.500h10.500" stroke="#000" stroke-width="1" fill="none"/><rect x="45.500" y="0.500" width="9.500" height="9.500" fill="none" stroke="#c8c8c8" stroke-width="1"/><path d="M91.300 0.300l10 10M101.300 0.300l-10 10" stroke="#000" stroke-width="1.150" fill="none"/></svg>
</div>
<div class="a" id="menubar" style="left:0;top:30px;width:965px;height:25px;background:#fff">
<span class="t" style="left:4.00px;top:6.80px;font-size:12px;transform:scaleX(0.9616);">File</span>
<span class="t" style="left:29.60px;top:6.80px;font-size:12px;transform:scaleX(1.0731);">Edit</span>
<span class="t" style="left:57.80px;top:6.80px;font-size:12px;transform:scaleX(1.0280);">Tools</span>
<span class="t" style="left:93.60px;top:6.80px;font-size:12px;transform:scaleX(1.0407);">Object</span>
<span class="t" style="left:136.70px;top:6.80px;font-size:12px;transform:scaleX(1.0311);">Text</span>
<span class="t" style="left:166.90px;top:6.80px;font-size:12px;transform:scaleX(1.0393);">Development</span>
<span class="t" style="left:247.30px;top:6.80px;font-size:12px;transform:scaleX(1.0350);">View</span>
<span class="t" style="left:281.90px;top:6.80px;font-size:12px;transform:scaleX(1.0612);">Window</span>
<span class="t" style="left:335.00px;top:6.80px;font-size:12px;transform:scaleX(1.0208);">Help</span>
</div>
<div class="a" id="toolbar" style="left:0;top:55px;width:964px;height:49px;background:#f0f0f0">
<svg style="left:30.2px;top:5.4px" width="25" height="21" viewBox="0 0 25 21"><rect x="0.600" y="0.600" width="23.800" height="19.800" fill="#f0f0f0" stroke="#000" stroke-width="1.200"/><rect x="0" y="0" width="25" height="3.700" fill="#000"/><rect x="18.800" y="1" width="1.800" height="1.600" fill="#fff"/><rect x="21.500" y="1" width="1.800" height="1.600" fill="#fff"/><circle cx="14.400" cy="9.700" r="3.700" fill="none" stroke="#000" stroke-width="1.700"/><path d="M11.700 12.700L6.900 17.500" stroke="#000" stroke-width="2.300" stroke-linecap="round"/></svg>
<span class="t" style="left:15.90px;top:30.60px;font-size:12px;transform:scaleX(1.0211);">Inspector</span>
<svg style="left:94px;top:5.4px" width="25" height="21" viewBox="0 0 25 21"><rect x="0.600" y="0.600" width="23.800" height="19.800" fill="#f0f0f0" stroke="#000" stroke-width="1.200"/><rect x="0" y="0" width="25" height="3.700" fill="#000"/><rect x="18.800" y="1" width="1.800" height="1.600" fill="#fff"/><rect x="21.500" y="1" width="1.800" height="1.600" fill="#fff"/><path d="M9.300 6.500h10c-1.300 2.300-1 4.800.2 7.200.6 1.300.5 2.600-.3 3.800H10c.9-1.100 1-2.300.5-3.500M9.300 6.500c-.5 1.100-.6 2.100-.4 3.200" fill="none" stroke="#111" stroke-width="1.300" stroke-linejoin="round"/><ellipse cx="8.200" cy="12.300" rx="3.200" ry="2.100" fill="none" stroke="#111" stroke-width="1.300"/><ellipse cx="11.800" cy="11.700" rx="3" ry="1.900" fill="none" stroke="#111" stroke-width="1.200"/></svg>
<span class="t" style="left:90.60px;top:30.60px;font-size:12px;transform:scaleX(1.0109);">Code</span>
<svg style="left:164px;top:5.4px" width="25.6" height="21" viewBox="0 0 25 21"><rect x="0.600" y="0.600" width="23.800" height="19.800" fill="#111" stroke="#000" stroke-width="1.200"/><rect x="0" y="0" width="25" height="3.700" fill="#000"/><rect x="18.800" y="1" width="1.800" height="1.600" fill="#fff"/><rect x="21.500" y="1" width="1.800" height="1.600" fill="#fff"/><path d="M1 5.200h23" stroke="#e8e8e8" stroke-width=".9"/><path d="M3.400 9l3.400 2.800-3.400 2.800" fill="none" stroke="#fff" stroke-width="1.500"/><path d="M7.600 14.600h3.800" stroke="#fff" stroke-width="1.300"/></svg>
<span class="t" style="left:140.90px;top:30.60px;font-size:12px;transform:scaleX(0.9835);">Message Box</span>
<div class="vsep" style="left:221px;top:4px"></div>
<svg style="left:0;top:0" width="965" height="49" viewBox="156 55 965 49"><path d="M406.8 67V63.7H410.1 M422.4 63.7H425.7V67 M425.7 78.7V82H422.4 M410.1 82H406.8V78.7 M414.05 63.7h4.4 M414.05 82h4.4 M406.8 70.65v4.4 M425.7 70.65v4.4" fill="none" stroke="#c3c3c3" stroke-width="1.600"/><circle cx="409.500" cy="67" r="7.300" fill="#f0f0f0"/><circle cx="409.500" cy="67" r="6.300" fill="#c3c3c3"/><path d="M409.500 63.700v6.600M406.200 67h6.600" stroke="#f4f4f4" stroke-width="1.700"/></svg>
<span class="t" style="left:240.60px;top:30.60px;font-size:12px;color:#a2a2a2;transform:scaleX(1.0432);text-shadow:1px 1px 0 #fff;">Group</span>
<svg style="left:0;top:0" width="965" height="49" viewBox="156 55 965 49"><path d="M475.3 66.5V63.2H478.6 M491.6 63.2H494.9V66.5 M494.9 78.7V82H491.6 M478.6 82H475.3V78.7 M482.9 63.2h4.4 M482.9 82h4.4 M475.3 70.4v4.4 M494.9 70.4v4.4" fill="none" stroke="#c3c3c3" stroke-width="1.600"/><path d="M472 63.500c-.6-1.800 2.600-4.600 5-4l6.700 8.100.9 6.200-5.900-2.200z" fill="#c3c3c3" stroke="#f0f0f0" stroke-width="1" stroke-linejoin="round"/><path d="M474.300 62.600l6.600 8.200M476 61.300l6.600 8.200M473.200 65l1.500-2.800 3.300-1.600" fill="none" stroke="#e6e6e6" stroke-width=".8"/><path d="M480 71.300l3.500-3.300" stroke="#e6e6e6" stroke-width=".7"/></svg>
<span class="t" style="left:297.90px;top:30.60px;font-size:12px;color:#a2a2a2;transform:scaleX(1.0196);text-shadow:1px 1px 0 #fff;">Edit Group</span>
<svg style="left:0;top:0" width="965" height="49" viewBox="156 55 965 49"><path d="M553.7 63.9V60.5H557.1 M569.5 60.5H572.9V63.9 M572.9 76.4V79.8H569.5 M557.1 79.8H553.7V76.4 M561 60.5h4.6 M561 79.8h4.6 M553.7 67.85v4.6 M572.9 67.85v4.6" fill="none" stroke="#000" stroke-width="2.300"/><rect x="559.600" y="64.400" width="9.800" height="9.200" fill="#000"/><path d="M567.900 68.500L564 77.400l-1.800-2.400-7.900 6.300-2-2.600 7.900-6.200-1.800-2.400z" fill="#000" stroke="#f0f0f0" stroke-width="1.100" stroke-linejoin="round"/></svg>
<span class="t" style="left:365.80px;top:30.60px;font-size:12px;font-weight:bold;transform:scaleX(0.9765);">Select Grouped</span>
<div class="vsep" style="left:460px;top:4px"></div>
<svg style="left:482.8px;top:8.5px" width="26" height="17" viewBox="0 0 26 17"><rect x="0" y="0" width="25.600" height="16.400" rx="2" fill="#000"/><path d="M3.500 3.300l9.300 7 9.300-7M3.500 13.600l7-5.800M22.100 13.600l-7-5.800" fill="none" stroke="#f0f0f0" stroke-width="1.100"/></svg>
<span class="t" style="left:470.90px;top:30.60px;font-size:12px;transform:scaleX(0.9780);">Messages</span>
<svg style="left:549px;top:6.4px" width="23" height="21" viewBox="0 0 23 21"><path d="M11.200 1.200L21.500 19.300H0.900z" fill="#000" stroke="#000" stroke-width="1.800" stroke-linejoin="round"/><rect x="10.200" y="7" width="2.100" height="6.300" fill="#fff"/><rect x="10.200" y="14.800" width="2.100" height="2.200" fill="#fff"/></svg>
<span class="t" style="left:545.60px;top:30.60px;font-size:12px;transform:scaleX(1.0100);">Errors</span>
<div class="vsep" style="left:598px;top:4px"></div>
<svg style="left:630px;top:6px" width="32" height="21" viewBox="0 0 32 21"><g transform="translate(6.7 3.9) scale(0.92)"><path d="M0 0c2.300 0 3.700 1.800 3.700 4.400 0 1.900-.7 3.400-1.800 4.300v1.200c3.200.8 5.700 2 6 4.900H-7.900c.3-2.900 2.800-4.100 6-4.900V8.700c-1.100-.9-1.800-2.400-1.800-4.300C-3.700 1.800-2.300 0 0 0z" fill="#000" stroke="#f0f0f0" stroke-width=".9"/></g><g transform="translate(25.3 3.9) scale(0.92)"><path d="M0 0c2.300 0 3.700 1.800 3.700 4.400 0 1.900-.7 3.400-1.800 4.300v1.200c3.200.8 5.700 2 6 4.900H-7.900c.3-2.900 2.800-4.100 6-4.900V8.700c-1.100-.9-1.800-2.400-1.800-4.300C-3.700 1.800-2.300 0 0 0z" fill="#000" stroke="#f0f0f0" stroke-width=".9"/></g><g transform="translate(16 0.4) scale(1.38)"><path d="M0 0c2.300 0 3.700 1.800 3.700 4.400 0 1.900-.7 3.400-1.800 4.300v1.200c3.200.8 5.700 2 6 4.900H-7.900c.3-2.900 2.800-4.100 6-4.900V8.700c-1.100-.9-1.800-2.400-1.800-4.300C-3.700 1.800-2.300 0 0 0z" fill="#000" stroke="#f0f0f0" stroke-width=".9"/></g></svg>
<span class="t" style="left:606.80px;top:30.60px;font-size:12px;transform:scaleX(0.9694);">Sample Stacks</span>
<svg style="left:708.5px;top:6.2px" width="27" height="21" viewBox="0 0 27 21"><path d="M13.200 0L26.400 6.800 13.200 13.600 0 6.800z" fill="#000"/><path d="M5.200 11.200v5.300c2 2.300 5 3.500 8 3.500s6-1.200 8-3.500v-5.300l-8 4.100z" fill="#000"/><path d="M24.300 8v8.500" stroke="#000" stroke-width="1.700"/></svg>
<span class="t" style="left:697.40px;top:30.60px;font-size:12px;transform:scaleX(1.0093);">Tutorials</span>
<svg style="left:773.9px;top:6.2px" width="22" height="21" viewBox="0 0 22 21"><rect x="0" y="0" width="5.800" height="21" rx=".8" fill="#000"/><rect x="6.700" y="0" width="5.800" height="21" rx=".8" fill="#000"/><path d="M13.800 4.200l4.700-1.400 3.500 16.800-4.700 1.400z" fill="#000"/><path d="M.8 3h4.200M.8 4.800h4.200M.8 6.600h4.200M7.500 3h4.200M7.500 4.800h4.200M7.500 6.600h4.200M14.800 6.800l3.800-1.100M15.200 8.600l3.800-1.100" stroke="#aaa" stroke-width=".8"/></svg>
<span class="t" style="left:756.90px;top:30.60px;font-size:12px;transform:scaleX(0.9536);">Resources</span>
<svg style="left:837px;top:5.6px" width="25" height="21.5" viewBox="0 0 25 21"><rect x="0.600" y="0.600" width="23.800" height="19.800" fill="#f0f0f0" stroke="#000" stroke-width="1.200"/><rect x="0" y="0" width="25" height="3.700" fill="#000"/><rect x="18.800" y="1" width="1.800" height="1.600" fill="#fff"/><rect x="21.500" y="1" width="1.800" height="1.600" fill="#fff"/><path d="M12.500 8.300c-2-1.300-4.500-1.400-7-.6v8c2.500-.8 5-.7 7 .6 2-1.300 4.500-1.400 7-.6v-8c-2.500-.8-5-.7-7 .6zM12.500 8.300v8" fill="none" stroke="#222" stroke-width="1.200"/></svg>
<span class="t" style="left:820.00px;top:30.60px;font-size:12px;transform:scaleX(1.0570);">Dictionary</span>
<div class="vsep" style="left:885px;top:4px"></div>
<svg style="left:908px;top:6.2px" width="30" height="21" viewBox="0 0 30 21"><rect x="1" y="1" width="27.500" height="19" rx="1.500" fill="#ddd" stroke="#c3c3c3" stroke-width="2"/><rect x="0" y="0" width="4.500" height="21" fill="#c3c3c3"/><rect x="25" y="0" width="4.500" height="21" fill="#c3c3c3"/><circle cx="2.200" cy="10.500" r="1" fill="#eee"/><path d="M11.500 5.500l8.500 5-8.500 5z" fill="#c3c3c3"/></svg>
<span class="t" style="left:911.70px;top:30.60px;font-size:12px;color:#a2a2a2;transform:scaleX(1.0038);text-shadow:1px 1px 0 #fff;">Test</span>
</div></div></div>
<div class="win" id="svg-tool" style="left:154px;top:150px;width:1088px;height:537px;background:#f0f0f0">
<div class="a" style="left:0;top:0;width:1px;height:537px;background:#fff"></div>
<div class="a" id="svg-inner" style="left:1px;top:0;width:1087px;height:537px">
<div class="a" style="left:0;top:0;width:1087px;height:30px;background:#fff">
<svg style="left:7.5px;top:6px" width="16" height="17" viewBox="0 0 16 17"><path d="M2.600 0h10.800a2.600 2.600 0 0 1 2.600 2.600v7.800a2.600 2.600 0 0 1-2.600 2.600H9.400L4.800 16.300l.4-3.300H2.600A2.600 2.600 0 0 1 0 10.400V2.600A2.600 2.600 0 0 1 2.600 0z" fill="#30ab6c"/><path d="M3.800 3v4.500c0 2 1.600 2.800 3.400 2.100M12.700 4.900c-.6-.8-1.400-1.300-2.400-1.300-1.700 0-2.800 1.300-2.800 3.100s1.100 3.100 2.800 3.100c1 0 1.800-.5 2.400-1.300" fill="none" stroke="#fff" stroke-width="1.500" stroke-linecap="round" stroke-linejoin="round"/></svg>
<span class="t" style="left:27.60px;top:9.20px;font-size:12px;color:#999;transform:scaleX(0.9670);">SVG Drawing Tool</span>
<svg style="left:980px;top:9px" width="104" height="12" viewBox="0 0 104 12"><path d="M0 5.500h10" stroke="#8f8f8f" stroke-width="1" fill="none"/><rect x="45.700" y="0.500" width="9.300" height="9.300" fill="none" stroke="#8f8f8f" stroke-width="1"/><path d="M91.200 0.300l10 10M101.200 0.300l-10 10" stroke="#8f8f8f" stroke-width="1.050" fill="none"/></svg>
</div>
<div class="field" id="filelist" style="left:9px;top:40px;width:190px;height:467px;border-color:#a4a6ad">
<div class="a" style="left:173px;top:0;width:15px;height:465px;background:#f0f0f0"></div>
<svg style="left:175px;top:3.700px" width="10" height="9" viewBox="0 0 10 9"><path d="M1.200 6.700L4.600 2.200 8 6.700" fill="none" stroke="#b2b2b2" stroke-width="1.500"/></svg>
<svg style="left:175px;top:452.200px" width="10" height="9" viewBox="0 0 10 9"><path d="M1.200 2.200L4.600 6.700 8 2.200" fill="none" stroke="#b2b2b2" stroke-width="1.500"/></svg>
<div class="li" style="top:3px"><span class="t" style="left:6.50px;top:3.00px;font-size:12px;">amcentrale33.svg</span></div>
<div class="li" style="top:21px"><span class="t" style="left:6.50px;top:3.00px;font-size:12px;transform:scaleX(1.0125);">amnord39.svg</span></div>
<div class="li" style="top:39px"><span class="t" style="left:6.50px;top:3.00px;font-size:12px;transform:scaleX(0.9933);">amsud39.svg</span></div>
<div class="li" style="top:57px"><span class="t" style="left:6.50px;top:3.00px;font-size:12px;">arctiquescandinave33.svg</span></div>
<div class="li" style="top:75px"><span class="t" style="left:6.50px;top:3.00px;font-size:12px;transform:scaleX(0.9914);">asiecentrale33.svg</span></div>
<div class="li" style="top:93px"><span class="t" style="left:6.50px;top:3.00px;font-size:12px;transform:scaleX(1.0057);">asieorientale33.svg</span></div>
<div class="li" style="top:111px"><span class="t" style="left:6.50px;top:3.00px;font-size:12px;transform:scaleX(0.9791);">asiesudest33.svg</span></div>
<div class="li sel" style="top:129px"><span class="t" style="left:6.50px;top:3.00px;font-size:12px;color:#fff;transform:scaleX(0.9711);">asieswest33.svg</span></div>
<div class="li" style="top:147px"><span class="t" style="left:6.50px;top:3.00px;font-size:12px;transform:scaleX(0.9502);">asie_est_sud33.svg</span></div>
<div class="li" style="top:165px"><span class="t" style="left:6.50px;top:3.00px;font-size:12px;transform:scaleX(1.0090);">bolivie70.svg</span></div>
<div class="li" style="top:183px"><span class="t" style="left:6.50px;top:3.00px;font-size:12px;transform:scaleX(0.9617);">caucase33.svg</span></div>
<div class="li" style="top:201px"><span class="t" style="left:6.50px;top:3.00px;font-size:12px;transform:scaleX(1.0107);">centrepacifique35.svg</span></div>
<div class="li" style="top:219px"><span class="t" style="left:6.50px;top:3.00px;font-size:12px;transform:scaleX(0.9946);">danube33.svg</span></div>
<div class="li" style="top:237px"><span class="t" style="left:6.50px;top:3.00px;font-size:12px;transform:scaleX(1.0113);">europemin37.svg</span></div>
<div class="li" style="top:255px"><span class="t" style="left:6.50px;top:3.00px;font-size:12px;transform:scaleX(1.0200);">europemin39.svg</span></div>
<div class="li" style="top:273px"><span class="t" style="left:6.50px;top:3.00px;font-size:12px;transform:scaleX(1.0188);">merjapon33.svg</span></div>
<div class="li" style="top:291px"><span class="t" style="left:6.50px;top:3.00px;font-size:12px;transform:scaleX(1.0095);">merjaune33.svg</span></div>
<div class="li" style="top:309px"><span class="t" style="left:6.50px;top:3.00px;font-size:12px;transform:scaleX(0.9807);">oceanie33.svg</span></div>
<div class="li" style="top:327px"><span class="t" style="left:6.50px;top:3.00px;font-size:12px;transform:scaleX(1.0061);">pacifique20.svg</span></div>
<div class="li" style="top:345px"><span class="t" style="left:6.50px;top:3.00px;font-size:12px;transform:scaleX(1.0263);">prochorient33.svg</span></div>
<div class="li" style="top:363px"><span class="t" style="left:6.50px;top:3.00px;font-size:12px;transform:scaleX(0.9915);">scandinavie33.svg</span></div>
<div class="li" style="top:381px"><span class="t" style="left:6.50px;top:3.00px;font-size:12px;transform:scaleX(1.0322);">worldHigh.svg</span></div>
<div class="li" style="top:399px"><span class="t" style="left:6.50px;top:3.00px;font-size:12px;transform:scaleX(1.0285);">worldLow.svg</span></div>
</div>
<svg id="svgpath-widget" style="left:252px;top:48px" width="233" height="158" viewBox="407 198 233 158">
<defs><clipPath id="bmc"><rect x="407" y="198" width="233" height="158"/></clipPath></defs><g clip-path="url(#bmc)">
<rect x="407" y="198" width="233" height="158" fill="#000"/>
<path fill="#f0f0f0" d="M405.2 203.1 413.1 207.1 419.7 213.0 420.3 220.2 424.2 229.4 427.5 232.0 429.5 237.2 434.7 241.1 435.1 235.9 438.0 232.6 435.4 230.0 433.4 226.1 433.4 220.2 438.0 218.2 443.3 216.9 447.8 219.5 452.4 218.9 457.7 216.9 461.6 217.8 457.7 219.9 451.8 221.5 450.5 226.1 451.1 231.3 455.0 237.2 461.6 241.1 465.5 241.8 468.2 239.2 473.4 240.5 477.3 242.5 483.9 239.8 489.1 239.2 488.5 244.4 487.2 251.0 485.8 257.5 484.5 265.4 482.6 268.0 476.0 268.0 473.4 266.7 468.2 266.0 461.6 268.7 455.0 267.4 445.9 265.4 439.3 263.4 431.5 259.5 425.6 260.2 422.3 263.4 421.6 268.7 418.3 271.3 413.1 269.3 405.2 267.4z M458.3 197.2 457.7 203.8 455.0 205.1 453.7 209.0 456.4 213.6 461.6 215.6 468.2 215.6 473.4 213.0 478.6 211.4 485.2 211.7 491.7 214.9 498.3 216.2 504.8 216.9 510.1 214.9 512.7 211.7 511.4 207.7 507.5 204.5 503.5 200.5 500.9 197.2z M535.1 197.2 537.0 202.5 536.4 205.1 539.7 210.3 544.2 215.6 548.2 219.5 544.9 221.5 543.6 226.1 542.3 230.7 544.2 234.6 549.5 237.9 554.7 240.5 560.0 239.2 563.9 237.9 562.6 233.9 563.3 228.7 561.3 225.4 558.7 222.1 558.0 218.2 559.3 213.6 558.7 209.0 555.4 205.8 552.1 202.5 550.1 197.2z M559.3 211.7 561.9 210.6 563.9 213.0 566.5 216.2 564.6 218.2 560.6 217.6 559.1 214.9z M474.0 273.6 475.1 273.6 477.3 278.6 480.2 283.1 482.3 282.5 483.9 275.9 484.9 275.9 483.9 281.8 486.5 285.1 489.8 290.3 493.7 296.2 497.6 301.5 500.9 306.7 502.0 312.6 504.8 317.2 509.4 322.5 512.7 327.7 516.0 333.6 517.3 340.2 519.3 348.0 521.9 351.3 518.0 351.9 514.0 346.0 508.8 340.8 504.2 339.5 502.2 334.9 500.3 329.0 495.7 324.4 494.1 318.5 493.3 312.6 490.4 308.0 486.8 305.4 486.5 301.5 483.2 294.3 479.9 287.1 478.6 283.8 476.0 279.2z M477.3 310.0 483.9 306.7 485.8 306.3 482.6 309.4 478.0 310.8z M539.0 275.3 541.6 273.0 547.5 273.0 550.1 277.2 552.8 282.5 557.4 286.4 561.9 289.0 566.5 289.7 570.5 288.4 573.7 286.7 575.7 287.7 576.4 291.7 574.4 296.2 573.1 290.3 570.5 294.3 565.9 298.9 561.9 300.8 557.4 301.5 554.1 299.5 552.1 296.2 549.5 293.6 548.2 291.0 546.2 287.7 542.9 283.1 540.3 278.6z M574.1 296.2 576.1 291.7 577.7 293.0 582.9 294.3 593.4 295.6 603.9 295.3 615.7 294.9 619.6 298.9 623.5 303.5 626.8 307.4 631.4 305.4 632.7 306.1 628.8 309.4 631.4 313.3 635.3 315.9 639.3 313.9 641.2 310.7 641.2 357.2 517.1 357.2 519.2 351.4 521.2 350.2 525.2 350.6 530.5 348.7 537.0 346.7 543.6 343.4 550.1 340.8 556.0 338.2 559.3 334.3 564.6 332.3 568.5 330.3 572.4 328.4 575.0 325.1 579.0 322.5 580.3 317.9 582.9 316.6 585.5 312.6 588.2 308.0 584.2 303.5 579.0 301.5 575.7 298.2z M532.5 221.5 535.7 221.9 534.2 224.8z"/>
<path fill="#d6d6d6" d="M519.3 199.6 529.4 199.6 529.4 201.9 519.3 201.9z M515.3 209.7 523.9 209.7 523.9 211.9 515.3 211.9z M520.6 219.3 529.4 219.3 529.4 221.5 520.6 221.5z M531.8 217.6 543.6 217.6 543.6 219.5 531.8 219.5z M617.6 200.8 633.4 200.8 633.4 202.9 617.6 202.9z M597.6 212.0 612.7 212.0 612.7 214.3 597.6 214.3z M515.3 259.2 521.2 259.2 521.2 261.7 515.3 261.7z M557.4 300.6 569.8 300.6 569.8 304.8 557.4 304.8z"/>
<path fill="#000" d="M405.2 214.9 411.1 216.9 415.7 221.5 414.4 223.5 410.5 222.8 409.4 226.1 409.8 230.0 405.2 231.3z M437.1 246.0 441.9 246.5 447.8 247.0 447.2 248.4 441.9 248.6 437.4 247.3z M473.4 248.4 478.6 246.4 482.6 244.4 480.6 247.7 476.7 249.7 474.0 249.7z M476.0 252.0 485.8 252.0 485.8 254.6 476.0 254.6z M476.0 261.1 483.2 261.1 483.2 263.4 476.0 263.4z M540.7 275.3 548.2 275.3 548.2 277.9 540.7 277.9z M548.6 287.1 557.4 287.1 557.4 289.7 548.6 289.7z M554.3 291.7 560.9 291.7 560.9 294.3 554.3 294.3z M548.6 290.7 550.4 291.7 550.4 297.2 549.1 294.9z M548.2 355.4 550.1 353.8 552.2 355.6z M560.6 350.9 565.2 350.6 563.9 352.7 561.7 352.2z M435.9 222.4 436.9 222.5 436.8 223.1 435.8 222.9z M440.6 218.2 441.4 218.3 441.2 219.0 440.5 218.8z M443.2 222.2 444.4 222.4 444.2 223.0 443.0 222.7z M446.1 220.8 446.8 220.9 446.7 221.6 446.0 221.4z M447.6 226.6 449.2 226.7 449.0 227.6 447.4 227.4z M446.8 231.0 447.9 231.1 447.7 231.7 446.7 231.5z M449.7 230.1 450.6 230.2 450.5 231.0 449.6 230.7z M440.4 228.0 441.4 228.2 441.3 228.7 440.3 228.5z M442.3 233.1 443.0 233.3 442.9 234.0 442.2 233.8z M443.2 237.9 443.9 238.0 443.7 238.6 443.0 238.4z M440.1 239.7 440.7 239.8 440.6 240.4 440.0 240.2z M448.9 234.0 449.6 234.2 449.5 234.7 448.7 234.5z M450.6 234.9 451.5 235.0 451.3 235.5 450.5 235.3z M448.1 239.8 448.7 240.0 448.6 240.5 448.0 240.3z M452.7 239.0 453.4 239.1 453.2 239.7 452.5 239.5z M454.7 242.0 455.6 242.2 455.4 243.0 454.5 242.8z M451.8 245.4 452.4 245.5 452.2 246.1 451.6 245.9z M444.5 237.5 445.1 237.7 444.9 238.1 444.4 237.9z M434.3 227.3 435.0 227.5 434.9 228.0 434.2 227.8z M437.4 229.1 438.4 229.2 438.2 229.7 437.2 229.4z M438.1 220.2 438.8 220.3 438.7 220.8 438.0 220.6z M444.7 225.6 445.3 225.8 445.2 226.2 444.5 226.0z M441.9 224.6 442.5 224.7 442.3 225.1 441.7 224.9z M450.1 223.5 450.8 223.6 450.7 224.1 450.0 223.9z M445.7 234.7 446.3 234.9 446.2 235.3 445.6 235.1z M441.6 230.0 442.2 230.2 442.0 230.5 441.4 230.3z M433.2 227.2 434.9 226.6 439.9 231.7 440.4 234.5 438.5 233.4 433.7 229.1z"/>
<path d="M618.3 343.0 626.8 343.0 M618.3 351.3 625.5 351.3" stroke="#8d8d8d" stroke-width="1.100" fill="none" stroke-dasharray="1.500 .7"/>
<path d="M637.6 338.2 637.6 353.9" stroke="#9a9a9a" stroke-width="1.300" fill="none" stroke-dasharray="1.200 .6"/>
</g></svg>
<span class="t" style="left:322.70px;top:245.70px;font-size:12px;">SVG Path (widget)</span>
<span class="t" style="left:281.70px;top:493.00px;font-size:12px;transform:scaleX(1.0080);">SVG Compiled Drawing (image)</span>
<div class="a" id="browser" style="left:559px;top:74px;width:528px;height:402px;background:#f0f0f0">
<div class="a" style="left:0;top:0;width:513px;height:385px;background:#fff;overflow:hidden">
<svg id="worldmap" style="left:0;top:0" width="513" height="385" viewBox="714 224 513 385">
<defs><clipPath id="cmc"><rect x="752" y="262" width="480" height="350"/></clipPath></defs>
<rect x="752" y="262" width="480" height="350" fill="#74c3ef"/>
<g clip-path="url(#cmc)" stroke="#141414" stroke-width=".5" stroke-linejoin="round">
<path d="M750.0 260.0 982.9 260.0 982.9 263.2 983.9 269.3 981.9 276.4 982.9 283.5 978.8 286.6 972.7 288.6 969.7 295.8 967.6 302.9 962.5 308.4 965.6 313.1 970.7 318.2 971.7 324.3 974.8 330.4 980.9 335.5 989.0 339.6 998.2 341.6 1005.3 343.1 1012.5 342.7 1018.6 340.6 1024.7 343.7 1031.8 342.7 1034.9 337.6 1041.0 334.5 1049.2 329.4 1057.3 325.3 1065.5 323.3 1073.6 321.3 1081.8 321.9 1089.9 322.3 1098.1 321.3 1101.2 319.2 1104.2 323.3 1108.3 327.4 1114.4 329.4 1119.5 328.4 1122.6 333.5 1126.6 338.6 1132.7 337.6 1136.8 339.6 1141.9 342.7 1148.0 345.7 1151.1 342.7 1154.1 345.7 1160.2 348.4 1168.4 347.8 1176.6 345.7 1184.7 344.7 1190.8 345.7 1196.9 347.8 1203.1 344.7 1211.2 340.6 1219.4 335.5 1224.5 331.5 1227.1 325.3 1226.5 320.2 1224.5 313.1 1221.4 306.0 1217.3 300.9 1211.2 296.8 1205.1 293.7 1200.0 290.7 1194.9 286.6 1190.8 282.5 1184.7 276.4 1178.6 270.3 1171.5 263.2 1171.5 260.0 1235.0 260.0 1235.0 615.0 750.0 615.0 753.2 572.4 761.3 573.0 771.5 576.5 783.7 581.5 793.9 588.7 800.0 591.7 806.2 593.4 812.3 591.7 818.4 587.7 822.5 581.5 824.5 574.4 821.5 567.3 819.4 560.1 822.5 552.0 828.6 544.9 836.7 539.8 844.9 537.7 853.1 534.7 861.2 536.3 869.4 538.3 877.5 540.8 879.6 543.8 879.6 547.9 884.7 550.6 890.8 551.0 896.9 554.0 903.0 556.1 910.1 555.5 915.2 556.7 917.3 561.2 917.9 565.2 924.4 566.3 931.5 564.2 938.7 565.2 943.2 565.6 951.3 567.3 959.5 571.4 967.6 572.4 975.8 575.4 983.9 577.5 992.1 581.5 998.2 578.5 1006.4 572.4 1012.5 570.3 1018.6 567.3 1026.7 564.2 1034.9 566.3 1043.1 567.3 1049.2 570.3 1057.3 574.4 1065.5 573.4 1069.6 575.0 1077.7 573.0 1085.9 570.9 1087.9 570.3 1093.0 561.2 1098.1 551.0 1102.2 540.8 1105.2 531.6 1108.3 522.4 1112.4 513.4 1116.4 505.3 1119.5 498.1 1117.5 491.0 1115.4 482.9 1116.4 474.7 1119.5 468.6 1118.5 465.5 1116.4 459.4 1120.5 455.3 1123.6 450.2 1121.5 444.7 1116.4 448.2 1112.4 452.3 1106.3 450.2 1098.1 447.2 1092.0 450.2 1085.9 455.3 1081.8 459.4 1073.6 461.5 1065.5 463.5 1058.3 464.5 1053.2 460.4 1048.1 455.3 1041.0 450.2 1032.9 447.2 1024.7 445.6 1018.6 446.2 1017.6 459.4 1010.4 459.4 1003.3 461.5 996.2 459.4 992.1 455.3 989.0 450.2 983.9 448.2 978.8 447.2 974.8 450.2 971.7 447.2 976.8 445.1 975.8 441.1 965.6 442.1 958.4 443.1 962.5 439.0 959.5 433.9 955.4 428.8 957.4 422.7 952.3 417.6 945.2 415.6 939.1 411.5 941.1 405.4 946.2 410.5 952.3 408.4 948.3 403.3 953.3 397.2 950.3 391.1 948.3 386.0 948.5 387.1 950.6 381.7 942.8 382.8 934.9 383.5 936.4 377.1 937.1 370.7 937.8 362.8 942.8 360.0 947.8 356.4 941.4 356.4 934.2 355.7 933.5 353.1 928.5 350.7 922.8 348.5 917.1 346.8 911.4 347.8 905.7 348.3 901.4 350.3 897.1 351.7 891.4 352.8 893.6 357.8 898.6 360.7 901.4 364.2 902.8 367.8 900.0 367.1 895.7 363.5 892.1 362.8 894.3 367.1 895.7 371.4 892.8 370.7 888.6 365.7 885.0 365.0 883.6 367.8 887.1 372.1 884.3 372.8 880.0 368.5 877.5 358.0 873.4 355.9 870.4 360.0 869.4 366.1 872.4 373.2 875.5 379.4 877.5 385.5 877.5 389.1 879.6 393.2 875.5 396.2 870.4 398.3 875.5 399.3 879.6 400.3 883.6 402.3 887.7 406.4 891.8 409.5 896.9 413.5 897.9 419.7 896.9 426.8 893.8 422.7 887.7 418.6 881.6 420.7 877.5 418.6 880.6 415.6 875.5 413.5 869.4 411.5 867.3 408.4 863.2 409.5 856.1 410.5 849.0 410.5 842.9 411.5 840.8 406.4 838.8 402.3 835.7 404.4 832.7 403.3 835.7 398.3 831.6 393.2 826.5 386.0 823.5 381.4 825.5 378.3 821.5 374.3 817.4 369.2 812.3 365.1 809.2 359.0 810.2 350.8 812.3 342.7 810.2 335.5 812.3 327.4 809.2 323.3 804.1 319.2 798.4 314.5 793.9 311.1 787.8 306.0 780.1 299.4 775.6 296.8 767.4 291.3 759.3 285.6 752.1 282.5z" fill="#fff8d0"/>
<path d="M870.4 262.1 873.4 266.2 876.5 269.3 879.6 274.4 887.7 275.4 895.9 274.4 904.0 275.4 912.2 276.4 920.3 279.5 928.5 278.4 936.6 274.4 945.2 268.3 955.4 267.2 965.6 270.9 970.7 269.7 981.9 276.4 983.9 269.3 982.9 262.1z" fill="#d4e9c8"/>
<path d="M867.3 270.3 876.5 269.3 879.6 274.4 887.7 275.4 895.9 274.4 904.0 275.4 912.2 276.4 920.3 279.5 928.5 278.4 936.6 274.4 945.2 268.3 955.4 267.2 965.6 270.9 970.7 269.7 981.9 276.4 982.9 283.5 978.8 286.6 972.7 288.6 969.7 295.8 967.6 302.9 962.5 308.4 965.6 313.1 970.7 318.2 971.7 322.3 963.5 322.3 955.4 320.2 947.2 322.3 941.1 326.4 949.9 320.7 944.2 323.6 940.7 325.7 942.8 329.3 939.9 328.6 935.7 330.7 935.6 335.5 928.5 337.6 920.3 338.6 912.2 335.5 906.1 332.5 899.9 333.5 891.8 334.5 883.6 336.5 877.5 337.6 876.5 330.4 875.5 320.2 869.4 313.1 867.3 308.0 868.3 301.9 873.4 297.8 877.5 291.7 872.4 285.6 866.3 277.4z" fill="#f0e0e8"/>
<path d="M752.1 262.1 808.2 262.1 813.3 268.3 810.2 272.3 812.3 277.4 809.2 282.5 802.1 283.5 800.0 287.6 793.9 295.8 792.9 301.9 798.4 314.5 793.9 311.1 787.8 306.0 780.1 299.4 778.6 296.8 775.6 292.7 771.5 287.6 765.4 281.5 757.2 273.3 752.1 269.3z" fill="#f0e0e8"/>
<path d="M752.1 269.3 757.2 273.3 765.4 281.5 771.5 287.6 775.6 292.7 778.6 296.8 780.1 299.4 775.6 296.8 767.4 291.3 759.3 285.6 752.1 282.5z" fill="#cde3ff"/>
<path d="M754.2 286.0 759.3 285.6 763.8 287.6 762.3 289.3 757.2 288.6z" fill="#d9eaff"/>
<path d="M756.8 290.9 763.3 291.3 768.6 293.3 767.0 295.0 760.9 293.7z" fill="#d9eaff"/>
<path d="M760.1 296.4 765.4 296.6 771.5 297.0 770.5 298.6 764.4 298.6z" fill="#d9eaff"/>
<path d="M802.1 283.5 807.2 283.5 810.2 287.6 816.4 292.7 823.5 296.8 828.6 298.8 823.5 302.9 822.5 308.0 816.4 306.0 813.3 311.1 809.2 316.2 809.2 323.3 804.1 319.2 798.4 314.5 792.9 301.9 793.9 295.8 800.0 287.6z" fill="#d4e9c8"/>
<path d="M823.5 302.9 828.6 298.8 832.7 293.7 837.8 291.7 841.8 295.8 846.9 302.9 854.1 304.9 851.0 310.0 850.0 316.2 844.9 318.2 838.8 319.2 833.7 325.3 831.6 318.2 828.6 313.1 822.5 308.0z" fill="#cde3ff"/>
<path d="M833.7 325.3 838.8 319.2 844.9 318.2 850.0 316.2 855.1 315.1 864.3 314.1 869.4 313.1 875.5 320.2 876.5 330.4 877.5 337.6 872.4 341.6 865.3 343.7 858.1 344.7 851.0 347.8 844.9 348.8 840.8 349.8 835.7 346.7 832.7 340.6 831.6 332.5z" fill="#d4e9c8"/>
<path d="M825.5 378.3 827.6 372.2 832.7 369.2 834.7 363.1 839.8 356.9 840.8 349.8 844.9 348.8 851.0 347.8 858.1 344.7 865.3 343.7 872.4 341.6 877.5 337.6 883.6 336.5 891.8 334.5 899.9 333.5 906.1 332.5 912.2 335.5 920.3 338.6 928.5 337.6 935.6 335.5 935.7 330.7 939.9 328.6 942.8 329.3 944.9 332.8 944.2 337.1 939.9 340.0 939.2 345.7 937.1 350.7 933.5 353.1 928.5 350.7 922.8 348.5 917.1 346.8 911.4 347.8 905.7 348.3 901.4 350.3 897.1 351.7 891.4 352.8 893.6 357.8 898.6 360.7 901.4 364.2 902.8 367.8 900.0 367.1 895.7 363.5 892.1 362.8 894.3 367.1 895.7 371.4 892.8 370.7 888.6 365.7 885.0 365.0 883.6 367.8 887.1 372.1 884.3 372.8 880.0 368.5 877.5 358.0 873.4 355.9 870.4 360.0 869.4 366.1 872.4 373.2 875.5 379.4 877.5 385.5 877.5 389.1 879.6 393.2 875.5 396.2 870.4 398.3 875.5 399.3 879.6 400.3 883.6 402.3 887.7 406.4 891.8 409.5 896.9 413.5 897.9 419.7 896.9 426.8 893.8 422.7 887.7 418.6 881.6 420.7 877.5 418.6 880.6 415.6 875.5 413.5 869.4 411.5 867.3 408.4 863.2 409.5 856.1 410.5 849.0 410.5 842.9 411.5 840.8 406.4 838.8 402.3 835.7 404.4 832.7 403.3 835.7 398.3 831.6 393.2 826.5 386.0 823.5 381.4 825.5 378.3z" fill="#cde3ff"/>
<path d="M842.9 421.7 846.9 415.6 853.1 412.5 861.2 413.5 867.3 415.6 873.4 418.6 878.5 422.7 880.6 428.8 885.7 429.9 886.7 432.9 881.6 434.9 877.5 431.9 873.4 429.9 875.5 436.0 878.5 444.1 880.6 454.3 876.5 453.3 872.4 448.2 869.4 450.2 868.3 456.4 865.3 450.2 861.2 443.1 857.1 448.2 853.1 444.1 851.0 436.0 852.0 430.9 846.9 425.8z" fill="#cde3ff"/>
<path d="M876.5 396.2 881.6 394.2 887.7 398.3 893.8 403.3 898.9 406.4 901.0 413.5 906.1 415.6 907.1 418.6 902.0 418.6 897.9 414.6 892.8 410.5 887.7 405.4 881.6 401.3z" fill="#cde3ff"/>
<path d="M887.7 475.7 890.8 473.7 894.8 475.7 899.9 474.7 902.0 478.8 908.1 478.8 914.2 477.8 920.3 479.8 927.5 480.8 930.5 483.9 936.6 482.9 939.7 483.9 937.7 488.0 930.5 488.0 924.4 489.0 918.3 490.0 911.2 490.6 908.1 486.9 902.0 485.9 894.8 483.9 888.7 481.8z" fill="#cde3ff"/>
<path d="M752.1 339.6 759.3 343.7 767.4 348.8 775.6 352.9 783.7 356.9 789.9 362.0 792.9 368.1 790.9 375.3 786.8 373.2 783.7 366.1 777.6 362.0 769.5 359.0 764.4 361.0 760.3 367.1 757.2 375.3 759.3 381.4 765.4 387.5 766.4 396.2 760.3 399.3 757.2 407.4 752.1 411.5z" fill="#f0e0e8"/>
<path d="M827.6 412.5 832.7 408.4 836.7 416.6 831.6 415.6z" fill="#cde3ff" stroke="#000" stroke-width=".8"/>
<path d="M833.7 421.7 839.8 423.7 836.7 426.8z" fill="#cde3ff" stroke="#000" stroke-width=".8"/>
<path d="M876.5 456.4 879.6 457.4 878.5 462.5 875.9 461.5z" fill="#cde3ff" stroke="#000" stroke-width=".8"/>
<path d="M815.3 376.3 818.4 377.3 821.5 382.4 823.5 385.5 820.4 385.5 817.4 381.4z" fill="#cde3ff" stroke="#000" stroke-width=".8"/>
<path d="M905.0 395.2 907.7 394.8 909.1 400.9 906.7 401.3z" fill="#cde3ff" stroke="#000" stroke-width=".8"/>
<path d="M909.1 419.7 911.8 419.3 914.6 423.7 912.6 425.2z" fill="#cde3ff" stroke="#000" stroke-width=".8"/>
<path d="M914.2 426.4 917.3 426.2 919.5 429.0 917.3 430.3z" fill="#cde3ff" stroke="#000" stroke-width=".8"/>
<path d="M901.0 426.8 903.6 427.2 904.0 434.9 902.0 434.5z" fill="#cde3ff" stroke="#000" stroke-width=".8"/>
<path d="M912.2 430.9 914.2 430.9 914.2 433.9 912.2 433.9z" fill="#cde3ff" stroke="#000" stroke-width=".8"/>
<path d="M914.2 441.1 918.7 439.6 919.3 443.1 915.2 444.1z" fill="#cde3ff" stroke="#000" stroke-width=".8"/>
<path d="M922.0 439.0 925.0 438.4 925.4 442.7 922.4 443.1z" fill="#cde3ff" stroke="#000" stroke-width=".8"/>
<path d="M902.0 448.6 906.7 447.8 906.1 451.3 902.4 450.6z" fill="#cde3ff" stroke="#000" stroke-width=".8"/>
<path d="M919.3 447.2 922.0 447.8 922.4 451.3 919.9 450.2z" fill="#cde3ff" stroke="#000" stroke-width=".8"/>
<path d="M938.7 450.6 942.3 449.8 942.8 452.7 939.3 453.3z" fill="#cde3ff" stroke="#000" stroke-width=".8"/>
<path d="M933.6 427.8 939.1 426.4 939.7 429.4 934.6 430.9z" fill="#cde3ff" stroke="#000" stroke-width=".8"/>
<path d="M929.5 405.4 935.6 404.4 936.6 409.5 934.6 415.6 931.5 415.2 933.6 410.5z" fill="#cde3ff" stroke="#000" stroke-width=".8"/>
<path d="M906.4 352.1 909.3 351.1 910.7 354.3 908.5 356.4 906.7 355.0z" fill="#cde3ff" stroke="#000" stroke-width=".8"/>
<path d="M923.5 358.8 926.4 358.0 927.8 360.2 925.4 361.4z" fill="#cde3ff" stroke="#000" stroke-width=".8"/>
<path d="M915.7 370.7 918.5 371.4 921.7 370.2 922.5 375.4 919.2 374.2 916.4 374.9z" fill="#cde3ff" stroke="#000" stroke-width=".8"/>
<path d="M931.4 387.8 938.5 385.9 942.8 389.9 944.2 394.2 939.9 394.9 934.9 392.8 932.1 390.6z" fill="#cde3ff" stroke="#000" stroke-width=".8"/>
<path d="M930.0 405.6 935.7 404.9 936.4 409.9 934.2 414.9 931.7 411.3z" fill="#cde3ff" stroke="#000" stroke-width=".8"/>
<path d="M904.5 395.9 906.8 395.4 908.5 399.9 906.8 400.9z" fill="#cde3ff" stroke="#000" stroke-width=".8"/>
<path d="M965.6 459.4 970.7 455.3 975.8 455.3 973.7 461.5 969.7 466.5 966.6 467.6z" fill="#cde3ff" stroke="#000" stroke-width=".8"/>
<path d="M953.3 469.0 956.0 468.6 956.4 478.4 953.8 478.8z" fill="#cde3ff" stroke="#000" stroke-width=".8"/>
<path d="M935.0 483.3 938.7 482.9 939.1 486.9 935.4 488.4z" fill="#cde3ff" stroke="#000" stroke-width=".8"/>
<path d="M959.5 447.8 972.1 446.8 972.7 449.2 960.5 450.2z" fill="#cde3ff" stroke="#000" stroke-width=".8"/>
<path d="M944.2 424.1 953.8 423.7 954.4 426.4 945.2 427.0z" fill="#cde3ff" stroke="#000" stroke-width=".8"/>
<path d="M935.0 427.4 939.1 426.8 938.7 428.8 935.0 429.2z" fill="#cde3ff" stroke="#000" stroke-width=".8"/>
<path d="M927.8 366.0 933.1 365.1 933.5 368.0 928.5 368.7z" fill="#fff8d0"/>
<path d="M950.3 444.5 956.0 444.1 956.4 448.8 951.3 449.2z" fill="#cde3ff"/>
<path d="M937.1 370.7 941.4 366.4 948.5 361.0 954.2 356.8 959.9 352.5 965.6 346.4 971.3 347.1 977.0 345.0 982.8 347.1 988.5 346.8 992.7 347.8 998.5 350.7 1002.7 353.1 997.0 355.0 991.3 356.4 986.3 358.8 993.5 360.7 985.6 361.0 978.5 361.4 971.3 362.1 970.2 358.5 966.3 359.2 965.6 362.8 959.9 362.1 957.1 360.0 951.4 360.7 944.9 364.2 939.9 368.2z" fill="#74c3ef"/>
<path d="M992.0 340.4 989.9 347.1" fill="none"/>
<path d="M1194.9 286.6 1198.0 282.1 1206.1 281.5 1211.2 284.6 1219.4 287.6 1228.5 291.7 1228.5 325.3 1226.5 320.2 1224.5 313.1 1221.4 306.0 1217.3 300.9 1211.2 296.8 1205.1 293.7 1200.0 290.7z" fill="#cde3ff"/>
<path d="M1224.5 331.5 1228.5 328.8 1228.5 335.5 1224.1 333.5z" fill="#cde3ff"/>
<path d="M1119.5 468.6 1124.6 466.5 1130.7 463.5 1132.7 458.4 1130.7 451.3 1132.7 447.2 1137.8 447.2 1139.9 451.3 1148.0 449.2 1156.2 447.2 1164.3 445.1 1170.4 447.2 1178.6 449.2 1186.8 450.2 1194.9 447.2 1203.1 443.1 1211.2 440.0 1219.4 440.5 1228.5 439.0 1228.5 452.3 1222.4 454.3 1219.4 459.4 1218.4 466.5 1221.4 472.7 1219.4 480.8 1217.3 489.0 1216.3 499.2 1215.3 500.0 1174.5 524.5 1135.8 548.9 1127.6 546.9 1120.5 542.8 1116.4 539.8 1117.4 535.7 1116.4 526.5 1118.5 524.5 1121.5 518.3 1126.6 515.3 1127.6 511.2 1131.7 506.1 1129.7 502.2 1127.6 496.1 1120.5 497.1 1119.5 491.0 1117.4 482.9 1116.4 474.7z" fill="#d4e9c8"/>
<path d="M1228.5 452.3 1222.4 454.3 1219.4 459.4 1218.4 466.5 1221.4 472.7 1219.4 480.8 1217.3 489.0 1216.3 499.2 1215.3 500.0 1174.5 524.5 1176.6 532.6 1178.6 540.8 1180.6 546.9 1183.7 548.9 1180.6 553.0 1192.9 554.0 1203.1 556.1 1213.3 563.2 1221.4 568.3 1228.5 571.8z" fill="#f0e0e8"/>
<path d="M1139.9 567.3 1156.2 561.2 1168.4 557.1 1180.6 553.0 1192.9 554.0 1203.1 556.1 1213.3 563.2 1221.4 568.3 1228.5 571.8 1228.5 611.1 1129.7 611.1 1135.8 601.9 1149.0 599.9 1148.0 593.8 1156.2 588.7 1148.0 577.5z" fill="#d4e9c8"/>
<path d="M1087.9 570.3 1093.0 561.2 1098.1 551.0 1102.2 540.8 1105.2 531.6 1108.3 530.6 1114.4 528.5 1116.4 526.5 1117.5 535.7 1115.4 542.8 1112.4 548.9 1111.4 559.1 1110.3 569.3 1109.3 579.5 1107.3 587.7 1104.2 597.9 1100.7 611.1 1099.7 611.1 1096.1 597.9 1092.0 585.6z" fill="#cde3ff"/>
<path d="M1104.2 543.8 1108.3 542.8 1110.7 547.9 1109.3 554.0 1109.9 561.2 1107.3 569.3 1101.2 570.3 1099.7 566.3 1103.2 561.2 1101.2 555.0 1101.8 547.9z" fill="none" stroke="#667" stroke-width=".5" stroke-dasharray="1 .8"/>
<path d="M1088.3 570.3 1091.0 567.3 1093.0 564.8" fill="none" stroke="#667" stroke-width=".5" stroke-dasharray="1 .8"/>
<path d="M1109.3 561.2 1111.6 560.8 1111.6 569.3 1109.3 570.5z" fill="#3f9be0"/>
<path d="M917.9 565.2 924.4 566.3 931.5 564.2 938.7 565.2 943.2 565.6 951.3 567.3 959.5 571.4 967.6 572.4 975.8 575.4 983.9 577.5 992.1 581.5 998.2 578.5 1006.4 572.4 1012.5 570.3 1018.6 567.3 1026.7 564.2 1034.9 566.3 1043.1 567.3 1049.2 570.3 1057.3 574.4 1065.5 573.4 1069.6 575.0 1077.7 573.0 1085.9 570.9 1087.9 570.3 1092.0 585.6 1096.1 597.9 1099.7 611.1 913.2 611.1 912.2 604.0 910.1 595.8 913.2 587.7 915.2 581.5 912.6 574.4 913.2 568.3z" fill="#f0e0e8"/>
<path d="M1052.2 611.1 1053.2 604.0 1055.3 599.9 1057.3 604.0 1058.3 611.1z" fill="#74c3ef"/>
<path d="M752.1 572.4 761.3 573.0 771.5 576.5 783.7 581.5 793.9 588.7 800.0 591.7 806.2 593.4 812.3 591.7 818.4 587.7 822.5 581.5 824.5 574.4 821.5 567.3 819.4 560.1 822.5 552.0 828.6 544.9 836.7 539.8 844.9 537.7 853.1 534.7 861.2 536.3 869.4 538.3 877.5 540.8 879.6 543.8 879.6 547.9 884.7 550.6 890.8 551.0 896.9 554.0 903.0 556.1 910.1 555.5 915.2 556.7 917.3 561.2 917.9 565.2 913.2 568.3 912.6 574.4 915.2 581.5 913.2 587.7 910.1 595.8 912.2 604.0 913.2 611.1 752.1 611.1z" fill="#d4e9c8"/>
<path d="M1062.4 479.8 1069.6 479.2 1077.7 477.8 1083.8 475.7 1089.9 473.1 1093.6 472.7 1089.9 475.7 1085.9 478.8 1082.8 481.8 1080.8 485.9 1075.7 486.9 1069.6 486.3 1063.4 485.5 1061.4 482.9z" fill="#f0e0e8"/>
<path d="M1050.6 486.9 1056.3 484.9 1062.4 485.5 1069.6 486.3 1075.7 486.9 1077.7 489.0 1073.6 491.0 1069.6 494.1 1064.5 496.1 1062.4 498.1 1058.3 495.1 1053.2 493.1 1051.2 490.0z" fill="#d4e9c8"/>
<path d="M1077.7 486.9 1083.8 488.0 1083.4 489.6 1077.7 489.0z" fill="#fff8d0"/>
</g>
<path d="M1107.800 510.700h10.500M1093.500 549.500l5 6" stroke="#667" stroke-width=".5" fill="none"/>
<path d="M752 612V262h480" fill="none" stroke="#000" stroke-width="2"/>
</svg>
<div class="a" style="left:363.0px;top:154.3px;width:43.5px;height:11.9px;background:rgba(255,255,255,.62);border-radius:3px"></div>
<span class="t" style="left:365.20px;top:154.30px;font-size:13px;font-style:italic;color:#17177a;transform:scaleX(1.0164);">Turkey</span>
<div class="a" style="left:435.0px;top:252.1px;width:33.3px;height:12.1px;background:rgba(255,255,255,.55);border-radius:3px"></div>
<span class="t" style="left:436.40px;top:251.05px;font-size:13.5px;font-style:italic;color:#17177a;transform:scaleX(0.9849);">Syria</span>
<div class="a" style="left:347.8px;top:279.8px;width:46.0px;height:11.7px;background:rgba(222,238,255,.85);border-radius:3px"></div>
<span class="t" style="left:350.30px;top:279.95px;font-size:11.5px;font-style:italic;color:#17177a;transform:scaleX(0.9357);">Lebanon</span>
<div class="a" style="left:349.6px;top:319.2px;width:29.9px;height:11.8px;background:rgba(222,238,255,.85);border-radius:3px"></div>
<span class="t" style="left:352.50px;top:319.95px;font-size:11.5px;font-style:italic;color:#17177a;transform:scaleX(0.9351);">Israel</span>
<div class="a" style="left:401.8px;top:329.4px;width:36.2px;height:10.9px;background:rgba(255,255,255,.85);border-radius:3px"></div>
<span class="t" style="left:403.20px;top:329.45px;font-size:11.5px;font-style:italic;color:#17177a;transform:scaleX(0.9354);">Jordan</span>
</div>
<div class="a" style="left:513px;top:0;width:15px;height:385px;background:#f0f0f0"></div>
<div class="a" style="left:515px;top:17.500px;width:13px;height:169px;background:#c1c1c1"></div>
<svg style="left:517px;top:5px" width="9" height="6" viewBox="0 0 9 6"><path d="M0 5.500L4.500 1 9 5.500z" fill="#a3a3a3"/></svg>
<svg style="left:517px;top:373px" width="9" height="6" viewBox="0 0 9 6"><path d="M0 .5L4.500 5 9 .5z" fill="#505050"/></svg>
<div class="a" style="left:0;top:385px;width:513px;height:17px;background:#f0f0f0"></div>
<div class="a" style="left:17px;top:387.300px;width:219px;height:12.200px;background:#c1c1c1"></div>
<svg style="left:5.500px;top:389px" width="6" height="9" viewBox="0 0 6 9"><path d="M5.500 0L1 4.500 5.500 9z" fill="#a3a3a3"/></svg>
<svg style="left:502px;top:389px" width="6" height="9" viewBox="0 0 6 9"><path d="M.5 0L5 4.500 .5 9z" fill="#505050"/></svg>
<div class="a" style="left:513px;top:385px;width:15px;height:17px;background:#dcdcdc"></div>
</div>
<span class="t" style="left:904.20px;top:492.80px;font-size:12px;transform:scaleX(1.0330);">Browser Widget</span>
<div class="field" id="pathfield" style="left:9px;top:516px;width:507px;height:22px;border-color:#a4a6ad">
<span class="t" style="left:6.70px;top:4.55px;font-size:9.5px;transform:scaleX(0.9181);">C:/Users/MacMio/Documents/02 LC CODE SCRIPTS/07 BRIAN SVG/SVG WORLD SIMPLE MAPS</span>
<svg style="left:482.5px;top:2.8px" width="19" height="14" viewBox="0 0 19 14"><path d="M.6 13.300V1.300c0-.4.300-.7.700-.7h4.500l1.500 1.800h7c.4 0 .7.300.7.700v2.200M.6 13.300l3-8h14.600l-3 8z" fill="#fff" stroke="#999" stroke-width="1.200" stroke-linejoin="round"/></svg>
</div>
<div class="field" id="infofield" style="left:526px;top:516px;width:560px;height:21px;border-color:#a4a6ad">
<span class="t" style="left:6.60px;top:5.60px;font-size:12px;transform:scaleX(1.0097);">asieswest33  [Bytes: 0 / 328249 / 344445]</span>
</div>
</div></div>
</body></html>
